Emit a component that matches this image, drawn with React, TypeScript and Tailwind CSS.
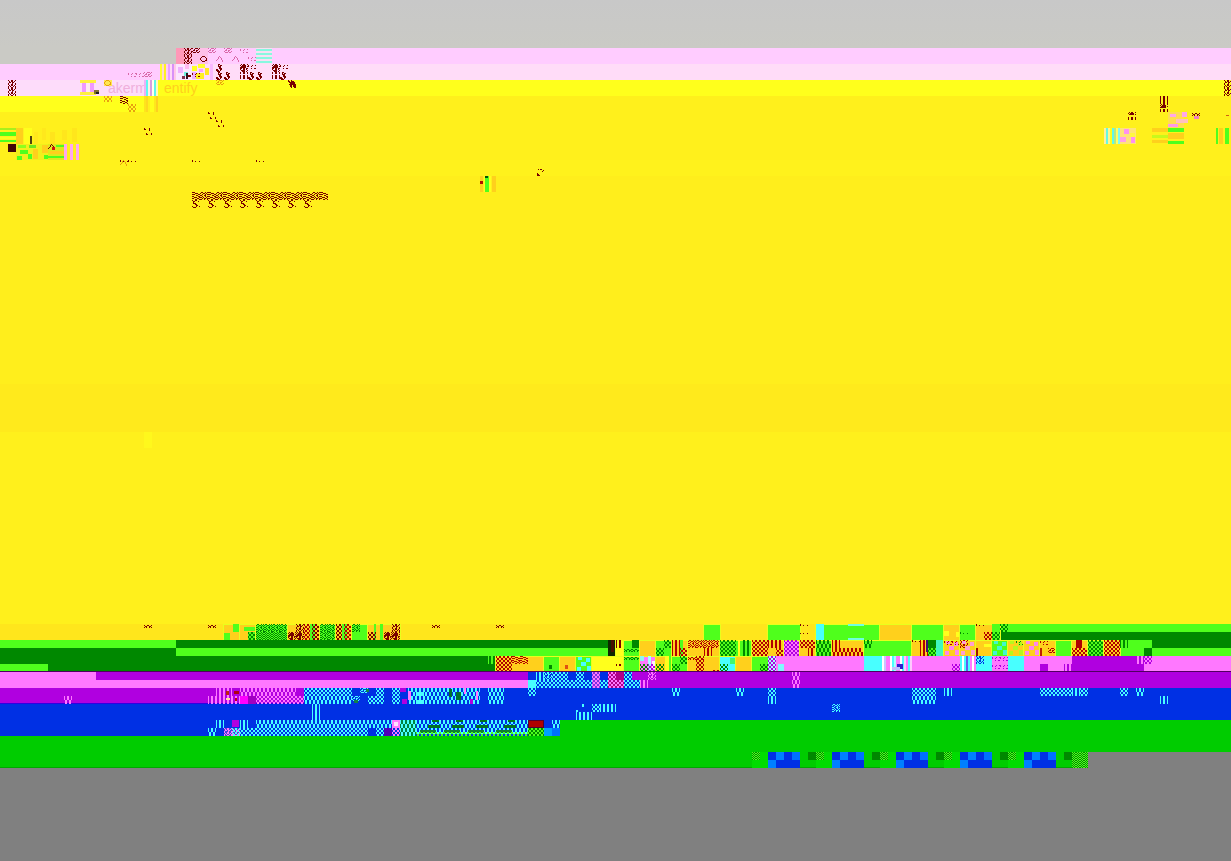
import React from "react";

type Cell = [x: number, y: number, w: number, h: number, fill: string];

const YELLOW = "#fff01c";
const BRIGHT = "#ffff1c";
const GOLD = "#ffd01c";
const LIME = "#4fff1c";
const DARK = "#008800";
const PINK = "#ff78ff";
const PURPLE = "#b000e0";
const BLUE = "#0030e4";
const CYAN = "#48ffff";
const MAROON = "#780000";

const INKS: Record<string, string> = {
  cyan: CYAN,
  pink: PINK,
  purple: PURPLE,
  red: "#b00000",
  maroon: MAROON,
  green: DARK,
  lime: LIME,
  mauve: "#d868a8",
  gold: "#e8a010",
  blue: BLUE,
};

// 8 x 8 dot tiles; each one can be printed in any of the inks.
const TILES: Record<string, string[]> = {
  check: ["x..xx..x", "x..xx..x", ".xx..xx.", ".xx..xx.", "x..xx..x", "x..xx..x", ".xx..xx.", ".xx..xx."],
  tall: ["x..xx..x", "x..xx..x", "x..xx..x", "x..xx..x", ".xx..xx.", ".xx..xx.", ".xx..xx.", ".xx..xx."],
  fine: ["x.x..x.x", ".x.xx.x.", "x.x..x.x", ".x.xx.x.", "x.x..x.x", ".x.xx.x.", "x.x..x.x", ".x.xx.x."],
  bars: ["x..xx..x", "x..xx..x", "x..xx..x", "x..xx..x", "x..xx..x", "x..xx..x", "x..xx..x", "x..xx..x"],
  hook: ["x..xx...", ".xx...x.", ".x......", ".xxx....", "...xx...", "....xx..", "x...x..x", ".xxx...."],
  weaveA: ["xxx.....", "...xxx..", "xxx...xx", "....xx..", "xx....xx", "..xxx..x", "xx...xx.", "...xx..x"],
  weaveB: [".xx..x.x", "x..xx.x.", "..x..x.x", "xx..xx..", "..x..x.x", "xx.x..x.", "..x.xx.x", "xx..x..x"],
  blob: [".x.xx..x", "x.xxxx..", ".xxxxx.x", "xxxxxx..", "xx.xx.xx", "x..xx.x.", ".xxxx..x", "..xxx.x."],
  bend: ["..xx....", "..x.xx..", "..xxx...", "...xx...", "...xxx..", "xx..xx..", "xxx.x...", ".xxx...."],
  fall: ["x..x....", "xx.xxx..", ".xxxxxx.", "..xxxxx.", ".xxxxxxx", "..xx.xxx", "..xx.xxx", "...x..xx"],
  twist: ["x..xx..x", ".x.xx.x.", ".xx.xx..", "x...x..x", "x..xx..x", ".x.xx.x.", "x.x..x.x", "x..xx..x"],
  ring: ["..xxx...", ".x...x..", "x.....x.", "x.....x.", ".x...xx.", "..xxx...", "........", "........"],
  loops: ["x..xxx.x", "..x...x.", ".xx.xx..", "x...x..x", ".xxx.xx.", "........", "........", "........"],
  ticks: ["........", "x...x..x", "x..x....", "........", "...x..xx", "........", "........", "........"],
  arrow: ["...x....", "..x.x...", "..x..x..", ".x...x..", "x.....x.", "......x.", "........", "........"],
  dots: ["x.......", "x..x...x", "........", "........", "........", "........", "........", "........"],
  wave: ["........", "x..xx..x", ".xx..xx.", "x.x..x.x", "........", "........", "........", "........"],
  spray: ["x....x..", "xx...x..", ".....x..", "........", "........", "..x....x", "..xx...x", "........"],
  comma: ["........", "..x.xx..", ".......x", "......x.", "........", ".x......", ".xx.....", ".xxx...."],
};

const p = (tile: string, ink: string) => `url(#${tile}-${ink})`;

function TileDefs() {
  return (
    <svg className="absolute h-0 w-0" aria-hidden="true">
      <defs>
        {Object.entries(TILES).flatMap(([name, rows]) =>
          Object.entries(INKS).map(([ink, color]) => (
            <pattern key={`${name}-${ink}`} id={`${name}-${ink}`} width="8" height="8" patternUnits="userSpaceOnUse">
              <path
                fill={color}
                shapeRendering="crispEdges"
                d={rows
                  .flatMap((row, y) => [...row].map((c, x) => (c === "x" ? `M${x} ${y}h1v1h-1z` : "")))
                  .join("")}
              />
            </pattern>
          )),
        )}
      </defs>
    </svg>
  );
}

function Band({ className, cells = [], children }: { className: string; cells?: Cell[]; children?: React.ReactNode }) {
  return (
    <div className={`relative flex ${className}`}>
      {children}
      {cells.length > 0 && (
        <svg className="absolute inset-0 h-full w-full" aria-hidden="true" shapeRendering="crispEdges">
          {cells.map(([x, y, w, h, fill], i) => (
            <rect key={i} x={x} y={y} width={w} height={h} fill={fill} />
          ))}
        </svg>
      )}
    </div>
  );
}

// A solid block with a one-pixel bright rim.
const block = (x: number, w: number, fill: string): Cell[] => [
  [x - 1, 0, w + 2, 16, "#e8ff1c"],
  [x, 1, w, 15, fill],
];
const vbars = (x: number, y: number, h: number, colors: string[], w = 2): Cell[] =>
  colors.map((c, i): Cell => [x + i * w, y, w, h, c]);
const spots = (x: number, color: string): Cell[] => [
  [x + 2, 1, 4, 3, color],
  [x + 10, 2, 4, 4, color],
  [x + 5, 6, 5, 4, color],
  [x + 1, 11, 4, 4, color],
  [x + 11, 10, 4, 5, color],
];

const row48: Cell[] = [
  [176, 0, 8, 16, "#ff98b8"], [184, 0, 8, 16, "#ffb0d0"], [192, 0, 16, 16, "#ffc0e8"],
  [184, 0, 8, 16, p("twist", "maroon")], [192, 0, 8, 8, p("loops", "maroon")], [200, 8, 8, 8, p("ring", "maroon")],
  [208, 0, 8, 8, p("loops", "mauve")], [224, 0, 8, 8, p("loops", "mauve")], [240, 0, 8, 8, p("ticks", "mauve")],
  [216, 8, 8, 8, p("arrow", "mauve")], [232, 8, 8, 8, p("arrow", "mauve")], [248, 8, 8, 8, p("ticks", "mauve")],
  [256, 0, 16, 16, "#f8e0f4"], [256, 1, 16, 2, "#88f8e0"], [256, 5, 16, 2, "#88f8e0"], [256, 9, 16, 2, "#88f8e0"], [256, 13, 16, 2, "#88f8e0"],
];
const row64: Cell[] = [
  ...vbars(160, 0, 16, ["#ffff30", "#ffd8d0", "#fff020", "#ffc8f8", "#e8a0ff", "#ffd8f8", "#d890f8", "#ffc8e8"]),
  [176, 0, 16, 16, "#fce4ff"], [178, 3, 5, 6, "#f0b0ff"], [185, 0, 4, 5, "#ffb8f0"], [184, 8, 4, 4, "#70f0e0"], [186, 9, 2, 6, "#301020"], [188, 11, 3, 2, MAROON], [182, 12, 3, 3, "#803050"],
  [192, 2, 5, 5, "#ffff20"], [198, 0, 7, 4, "#ffff30"], [205, 4, 4, 7, "#ffe820"], [196, 9, 8, 6, "#fff020"], [199, 5, 4, 3, "#f8a0ff"], [192, 8, 4, 7, "#f0b0ff"], [210, 0, 3, 16, "#f8b8ff"],
  [128, 8, 16, 8, p("ticks", "mauve")], [144, 8, 8, 8, p("loops", "mauve")], [192, 8, 8, 8, p("ticks", "maroon")],
  [216, 0, 8, 8, p("bend", "maroon")], [216, 8, 16, 8, p("bend", "maroon")],
  [240, 0, 8, 8, p("blob", "maroon")], [248, 0, 8, 8, p("ticks", "maroon")], [240, 8, 8, 2, p("bars", "maroon")], [240, 11, 8, 4, p("bars", "maroon")], [248, 8, 16, 8, p("bend", "maroon")],
  [272, 0, 8, 8, p("blob", "maroon")], [280, 0, 8, 8, p("ticks", "maroon")], [272, 8, 8, 2, p("bars", "maroon")], [272, 11, 8, 4, p("bars", "maroon")], [280, 8, 8, 8, p("bend", "maroon")],
];
const row80: Cell[] = [
  [8, 0, 8, 16, p("twist", "maroon")],
  [80, 0, 16, 3, "#fff040"], [80, 12, 16, 3, "#fff040"], [82, 3, 4, 9, "#f098ff"], [90, 3, 4, 9, "#f098ff"], [86, 3, 4, 9, "#ffe8f0"],
  [94, 10, 5, 4, "#807030"], [96, 12, 3, 2, "#202020"], [104, 0, 8, 6, "#ffe850"], [104, 0, 8, 8, p("ring", "gold")],
  ...vbars(144, 0, 16, ["#f0b0f8", "#60f8f0", "#fff0e8", "#d8a0e0", "#fffff0", "#60f8e8", "#fff8c0", "#ffff20"]),
  [208, 6, 8, 2, p("dots", "gold")], [216, 0, 8, 8, p("loops", "gold")], [288, 0, 8, 8, p("fall", "maroon")], [1224, 0, 8, 16, p("twist", "maroon")],
];
const row96: Cell[] = [
  [104, 0, 8, 6, p("check", "gold")], [120, 0, 8, 8, p("weaveA", "maroon")], [128, 8, 8, 8, p("check", "gold")],
  ...vbars(144, 0, 16, ["#ffe41c", "#ffd820", "#fff01c", BRIGHT, BRIGHT, "#ffe81c", "#ffd020", "#fff01c"]),
  [1160, 0, 8, 8, p("bars", "maroon")], [1160, 8, 8, 4, p("blob", "maroon")], [1160, 13, 8, 3, p("bars", "maroon")],
];
const row112: Cell[] = [
  [208, 0, 8, 8, p("spray", "maroon")], [216, 8, 8, 8, p("spray", "maroon")], [1128, 0, 8, 3, p("blob", "maroon")], [1128, 5, 8, 3, p("bars", "maroon")],
  [1168, 0, 16, 16, "#ffdf50"], [1170, 2, 6, 3, "#ffa8e8"], [1182, 0, 5, 5, "#ffa8e8"], [1176, 7, 12, 4, "#ffc0c0"], [1168, 12, 10, 3, "#ff98e8"],
  [1192, 1, 8, 6, p("wave", "maroon")], [1194, 4, 5, 3, "#f080c0"], [1226, 3, 3, 1, "#d06010"],
];
const row128: Cell[] = [
  [0, 0, 16, 2, "#a8f01c"], [0, 4, 16, 4, LIME], [0, 9, 16, 2, "#f8ff1c"], [0, 12, 16, 2, LIME],
  [16, 0, 7, 16, GOLD], [24, 0, 8, 16, BRIGHT], [30, 8, 2, 8, "#504010"],
  [34, 4, 4, 12, "#ffe81c"], [42, 0, 4, 12, "#ffe81c"], [50, 4, 5, 12, "#ffe41c"], [62, 2, 5, 10, "#ffe61c"], [72, 0, 5, 14, "#ffe61c"],
  [144, 0, 8, 8, p("spray", "maroon")],
  ...vbars(1104, 0, 16, ["#fff0a0", "#68f8e0", "#fff890", BRIGHT, "#60f8e8", "#b8e880", "#ffff60", "#80f8f0"]),
  [1120, 0, 16, 16, "#ffe478"], [1124, 1, 5, 5, "#ff90f0"], [1130, 5, 5, 4, "#fff840"], [1120, 9, 6, 5, "#ffa0e8"], [1131, 9, 4, 6, "#ff90f0"],
  [1152, 0, 16, 4, GOLD], [1152, 7, 16, 3, "#c8f81c"], [1152, 12, 16, 3, GOLD], [1168, 0, 16, 4, LIME], [1168, 5, 16, 6, GOLD], [1168, 13, 16, 3, LIME],
  [1216, 0, 2, 16, LIME], [1219, 0, 4, 16, GOLD], [1225, 0, 4, 16, LIME],
];
const row144: Cell[] = [
  [8, 0, 8, 8, "#400808"],
  [16, 0, 32, 16, "#f0f01c"], [18, 1, 8, 3, "#90ff1c"], [20, 6, 8, 4, LIME], [29, 1, 7, 3, "#70e81c"], [17, 12, 5, 4, LIME], [28, 10, 4, 5, LIME], [33, 5, 5, 10, GOLD], [42, 1, 6, 8, GOLD], [44, 11, 4, 4, LIME],
  [48, 0, 16, 16, "#e0e81c"], [56, 1, 8, 2, LIME], [50, 7, 14, 3, GOLD], [48, 12, 16, 2, LIME], [48, 0, 8, 8, p("arrow", "maroon")], [52, 3, 3, 3, "#d01010"],
  [64, 0, 3, 16, "#ffa8f0"], [70, 0, 3, 16, "#ffa8f0"], [76, 0, 3, 16, "#ffa8f0"],
];
const row160: Cell[] = [
  [120, 0, 8, 8, p("arrow", "gold")], [120, 0, 16, 2, p("dots", "maroon")], [192, 0, 8, 2, p("dots", "maroon")], [256, 0, 8, 2, p("dots", "maroon")],
  [536, 8, 8, 8, p("comma", "maroon")],
];
const row176: Cell[] = [
  [480, 0, 3, 16, GOLD], [484, 0, 7, 16, BRIGHT], [485, 0, 4, 16, LIME], [485, 0, 3, 2, "#085008"], [480, 5, 3, 3, "#b01000"], [492, 0, 4, 16, GOLD],
];
const row192: Cell[] = [
  ...[192, 208, 224, 240, 256, 272, 288, 304, 320].map((x): Cell => [x, 0, 8, 8, p("weaveA", "maroon")]),
  ...[200, 216, 232, 248, 264, 280, 296, 312].map((x): Cell => [x, 0, 8, 8, p("weaveB", "maroon")]),
  ...[192, 208, 224, 240, 256, 272, 288, 304].map((x): Cell => [x, 8, 8, 8, p("hook", "maroon")]),
];

const row624: Cell[] = [
  [144, 0, 8, 8, p("wave", "maroon")], [208, 0, 8, 8, p("wave", "maroon")], [432, 0, 8, 8, p("wave", "maroon")], [496, 0, 8, 8, p("wave", "maroon")],
  ...block(224, 16, GOLD), [224, 9, 6, 7, LIME], [233, 0, 7, 8, LIME], [239, 8, 2, 8, BRIGHT],
  ...block(240, 16, GOLD), [244, 3, 12, 4, LIME], [248, 8, 8, 8, LIME], [248, 8, 8, 8, p("check", "green")],
  ...block(256, 32, LIME), [256, 0, 32, 8, p("weaveB", "green")], [256, 8, 32, 8, p("fine", "green")],
  ...block(288, 32, GOLD), [288, 8, 16, 8, p("blob", "maroon")], [296, 0, 8, 8, p("twist", "maroon")], [304, 0, 8, 16, p("check", "red")], [310, 0, 5, 16, LIME], [312, 0, 8, 16, p("check", "maroon")],
  ...block(320, 16, LIME), [320, 0, 16, 16, p("weaveB", "green")],
  ...block(336, 16, GOLD), [336, 0, 8, 16, p("check", "maroon")], [342, 0, 5, 16, LIME], [344, 0, 8, 16, p("check", "red")],
  ...block(352, 16, LIME), [352, 0, 8, 8, p("weaveB", "green")],
  ...block(368, 32, GOLD), [374, 0, 2, 16, LIME], [380, 0, 3, 16, LIME], [368, 8, 8, 8, p("check", "maroon")], [384, 8, 16, 8, p("blob", "maroon")], [392, 0, 8, 8, p("twist", "maroon")],
  ...block(704, 16, LIME), ...block(768, 32, LIME), [800, 0, 8, 2, p("dots", "maroon")], [800, 9, 8, 2, p("dots", "maroon")],
  ...block(816, 64, LIME), [816, 0, 8, 16, CYAN], [848, 0, 16, 2, "#70ffe0"], [848, 14, 16, 2, "#70ffe0"],
  ...block(880, 32, GOLD), ...block(912, 32, LIME), ...block(944, 16, GOLD), [944, 7, 5, 5, BRIGHT], [956, 8, 4, 5, BRIGHT],
  ...block(960, 16, LIME), [960, 8, 8, 8, p("dots", "green")], ...block(976, 24, GOLD), [976, 0, 8, 8, p("dots", "maroon")], [984, 8, 8, 8, p("check", "red")], [992, 0, 8, 16, LIME], [992, 8, 8, 8, p("check", "green")], [1000, 0, 8, 8, p("check", "green")],
];
const row640: Cell[] = [
  [608, 0, 8, 16, "#102800"], [611, 0, 3, 12, "#481000"], ...block(616, 8, BRIGHT), [616, 0, 8, 8, p("bars", "maroon")],
  ...block(624, 16, LIME), [624, 8, 16, 8, p("wave", "green")], [632, 0, 8, 8, DARK],
  ...block(640, 16, GOLD), ...block(656, 16, LIME), [664, 0, 8, 8, p("check", "green")], [656, 8, 8, 8, p("check", "green")],
  ...block(672, 16, GOLD), [672, 0, 8, 16, p("bars", "red")], [680, 0, 3, 16, LIME], [680, 8, 8, 8, p("check", "red")],
  ...block(688, 32, GOLD), [688, 0, 32, 8, p("weaveB", "red")], [704, 8, 8, 8, p("bars", "red")],
  ...block(720, 32, LIME), [720, 0, 16, 16, p("check", "green")], [738, 0, 2, 16, BRIGHT], [743, 0, 8, 16, p("bars", "green")],
  ...block(752, 32, GOLD), [752, 0, 16, 16, p("check", "red")], [768, 0, 16, 8, p("bars", "red")], [776, 8, 8, 8, p("check", "red")],
  ...block(784, 16, PINK), [784, 0, 16, 16, p("check", "purple")],
  ...block(800, 16, GOLD), [800, 0, 16, 8, p("check", "red")], [808, 8, 8, 8, p("bars", "red")],
  ...block(816, 16, LIME), [816, 0, 16, 16, p("tall", "green")], ...block(832, 32, GOLD), [832, 0, 8, 8, p("bars", "red")], [832, 8, 32, 8, p("tall", "red")],
  ...block(864, 48, LIME), [864, 0, 8, 8, p("tall", "green")],
  ...block(912, 16, GOLD), [920, 0, 8, 16, p("bars", "red")], [912, 0, 8, 8, p("dots", "maroon")], [926, 0, 2, 12, "#401070"], [928, 0, 8, 16, DARK], [928, 8, 8, 8, p("check", "lime")], [936, 0, 8, 16, "#40f8c0"],
  ...block(944, 16, GOLD), ...spots(944, "#ff88e8"), [944, 0, 16, 8, p("ticks", "red")], ...block(960, 16, GOLD), [960, 0, 8, 8, p("twist", "red")], ...spots(960, "#ffa0d0"),
  ...block(976, 16, GOLD), [976, 8, 2, 8, "#a01000"], [984, 4, 8, 3, BRIGHT], ...block(992, 16, LIME), ...spots(992, "#40f8d0"),
  ...block(1008, 16, GOLD), ...spots(1008, "#b8f81c"), [1016, 0, 8, 8, p("ticks", "green")], ...block(1024, 16, GOLD), ...spots(1024, "#ff88e8"),
  ...block(1040, 16, GOLD), [1040, 8, 2, 8, "#c02000"], [1040, 0, 8, 8, p("ticks", "red")], [1048, 8, 8, 8, p("loops", "red")], ...block(1056, 16, LIME),
  ...block(1072, 16, GOLD), [1076, 0, 6, 8, "#b00000"], [1072, 8, 16, 8, p("check", "red")],
  ...block(1088, 16, LIME), [1088, 0, 16, 16, p("check", "green")], ...block(1104, 16, GOLD), [1104, 0, 16, 16, p("check", "red")], [1120, 0, 8, 8, p("bars", "green")], [1144, 8, 8, 8, DARK],
];
const row656: Cell[] = [
  [488, 0, 8, 8, p("bars", "lime")], ...block(496, 48, GOLD), [496, 0, 16, 16, p("check", "red")], [512, 0, 16, 8, p("weaveA", "red")],
  ...block(544, 16, LIME), [549, 9, 3, 4, DARK], ...block(560, 16, GOLD), [565, 9, 3, 4, "#e05010"],
  ...block(576, 16, LIME), ...spots(576, CYAN), ...block(592, 32, BRIGHT), [616, 8, 8, 2, p("bars", "maroon")],
  ...block(624, 16, LIME), [624, 0, 16, 8, p("wave", "green")],
  ...block(640, 16, PINK), [640, 0, 4, 5, "#90f8f0"], [648, 0, 3, 16, "#a8ffff"], [640, 8, 8, 8, p("check", "green")], [652, 5, 3, 8, "#fff0ff"], [648, 8, 8, 8, p("check", "purple")],
  ...block(656, 16, GOLD), [656, 8, 8, 8, p("check", "green")], [665, 0, 4, 16, BRIGHT], [669, 0, 3, 16, LIME],
  ...block(672, 16, LIME), [672, 8, 8, 8, p("check", "green")], [680, 0, 8, 8, p("check", "green")], ...block(688, 32, GOLD), [688, 0, 16, 8, p("wave", "red")], [696, 0, 8, 16, p("check", "red")], [712, 14, 8, 2, p("check", "red")],
  ...block(720, 16, CYAN), [720, 8, 8, 8, p("check", "green")], [730, 2, 5, 6, "#40f870"], ...block(736, 16, GOLD), ...block(752, 16, LIME), [760, 8, 8, 8, p("check", "green")],
  [768, 0, 8, 16, "#a8ffff"], [768, 0, 8, 16, p("check", "purple")], [778, 8, 6, 8, "#80f8ff"],
  [864, 0, 16, 16, CYAN], ...vbars(880, 0, 16, [CYAN, "#fff", "#c8c8ff", PINK, PINK, "#fff", CYAN, "#a8ffff", PINK, PINK, "#fff", CYAN, "#ffc8ff", PINK, CYAN, "#ffc8ff"]), [897, 8, 6, 5, "#3020d0"], [892, 11, 8, 3, "#c0c0ff"],
  [912, 0, 16, 8, p("ticks", "pink")], [952, 8, 8, 8, p("check", "purple")], ...vbars(960, 0, 16, [CYAN, "#fff", CYAN, "#6060f0", CYAN, PINK, "#fff", PINK]), [976, 0, 16, 16, CYAN], [976, 0, 8, 8, p("twist", "blue")],
  [992, 0, 16, 16, p("ticks", "purple")], [1008, 0, 16, 16, CYAN], [1040, 8, 8, 8, PURPLE], [1064, 8, 8, 8, p("bars", "purple")],
  [1072, 0, 64, 16, PURPLE], [1136, 0, 8, 8, p("bars", "purple")], [1136, 8, 8, 8, PURPLE], [1144, 0, 8, 8, p("check", "purple")],
];
const row672: Cell[] = [
  [528, 0, 120, 16, BLUE], [528, 8, 8, 8, CYAN], [536, 0, 8, 8, p("bars", "cyan")], [544, 0, 8, 8, p("twist", "cyan")], [552, 0, 16, 8, p("check", "cyan")], [576, 0, 8, 8, p("check", "cyan")], [536, 8, 56, 8, p("check", "cyan")],
  [592, 0, 8, 16, "#8030e0"], [592, 0, 8, 16, p("check", "pink")], [600, 8, 8, 8, p("check", "cyan")], [608, 0, 16, 16, "#b00088"], [608, 0, 8, 16, p("check", "pink")], [616, 8, 8, 8, p("check", "pink")],
  [624, 0, 8, 16, p("check", "cyan")], [632, 0, 8, 8, PURPLE], [632, 8, 8, 8, p("check", "cyan")], [640, 0, 16, 16, PURPLE], [640, 8, 8, 8, p("bars", "pink")], [648, 0, 8, 8, p("twist", "pink")], [792, 0, 8, 16, p("tall", "pink")],
];
const row688: Cell[] = [
  [64, 8, 8, 8, p("tall", "pink")], [208, 8, 32, 8, p("bars", "pink")], [216, 0, 16, 8, p("bars", "pink")], [240, 0, 56, 8, p("tall", "pink")], [240, 8, 8, 8, "#ff00ff"], [248, 8, 8, 8, "#a000c0"], [256, 8, 48, 8, p("check", "pink")],
  [226, 3, 3, 4, "#c02010"], [234, 3, 5, 3, "#b00010"], [226, 10, 4, 2, "#ffe0a0"], [235, 10, 2, 3, "#c00010"],
  [304, 0, 48, 8, p("check", "cyan")], [304, 8, 48, 8, p("tall", "cyan")], [360, 0, 8, 8, p("loops", "cyan")], [366, 1, 3, 3, "#108048"], [352, 8, 8, 8, p("loops", "cyan")], [354, 12, 4, 3, "#108048"], [376, 0, 8, 16, p("check", "cyan")], [392, 0, 8, 16, p("check", "cyan")], [368, 8, 8, 8, p("check", "cyan")],
  [400, 0, 6, 4, PURPLE], [402, 11, 5, 5, PURPLE], [408, 0, 72, 16, p("tall", "cyan")], [408, 3, 3, 9, PINK], [416, 0, 8, 16, p("bars", "cyan")], [449, 1, 3, 8, "#007030"], [456, 4, 5, 8, "#007030"], [464, 0, 2, 6, PINK], [470, 11, 3, 5, PURPLE], [476, 3, 2, 9, PINK],
  [488, 0, 16, 16, p("tall", "cyan")], [528, 0, 8, 8, p("check", "cyan")], [672, 0, 8, 8, p("tall", "cyan")], [736, 0, 8, 8, p("tall", "cyan")], [768, 0, 8, 8, p("check", "cyan")], [768, 8, 8, 8, p("bars", "cyan")],
  [912, 0, 24, 8, p("check", "cyan")], [912, 8, 24, 8, p("tall", "cyan")], [944, 0, 8, 8, p("bars", "cyan")], [1040, 0, 32, 8, p("check", "cyan")], [1072, 0, 8, 8, p("bars", "cyan")], [1080, 0, 8, 8, p("check", "cyan")], [1120, 0, 8, 8, p("check", "cyan")], [1136, 0, 8, 8, p("tall", "cyan")], [1160, 8, 8, 8, p("bars", "cyan")],
];
const row704: Cell[] = [
  [312, 0, 8, 16, p("bars", "cyan")], [582, 0, 2, 3, CYAN], [576, 6, 2, 2, CYAN], [576, 8, 16, 8, p("bars", "cyan")], [592, 0, 8, 8, p("check", "cyan")], [600, 0, 16, 8, p("bars", "cyan")], [832, 0, 8, 8, p("weaveB", "cyan")],
];
const row720: Cell[] = [
  [216, 0, 8, 8, p("bars", "cyan")], [208, 8, 8, 8, p("tall", "cyan")], [232, 0, 7, 7, PURPLE], [240, 0, 8, 8, p("bars", "cyan")], [256, 0, 136, 8, p("tall", "cyan")], [240, 8, 128, 8, p("check", "cyan")], [224, 8, 16, 8, "#5040d8"], [224, 8, 16, 8, p("twist", "pink")], [232, 8, 8, 8, p("check", "cyan")], [376, 8, 8, 8, p("check", "cyan")],
  [392, 0, 8, 8, PINK], [394, 2, 4, 4, "#ffe0ff"], [384, 8, 8, 8, "#5000b8"], [392, 8, 8, 8, p("check", "pink")],
  [400, 0, 16, 16, "#008040"], [400, 0, 128, 16, p("tall", "cyan")],
  ...[432, 456, 480, 508].flatMap((x): Cell[] => [[x, 0, 7, 2, "#007020"], [x - 4, 5, 12, 3, "#007020"], [x - 12, 10, 16, 3, "#108030"]]), [416, 12, 112, 4, p("check", "lime")],
  [528, 0, 16, 8, "#500030"], [529, 1, 14, 6, "#b00000"], [528, 8, 16, 8, DARK], [528, 8, 16, 8, p("check", "lime")], [544, 8, 8, 8, "#00a0ff"], [552, 8, 8, 8, "#0070ff"], [552, 0, 8, 8, p("tall", "cyan")],
];
const row752: Cell[] = [
  ...[752, 816, 880, 944, 1008].flatMap((x): Cell[] => [
    [x, 0, 16, 16, "#00dc00"], [x, 0, 8, 8, DARK], [x, 0, 8, 8, p("fine", "lime")],
    [x + 16, 0, 32, 16, BLUE], [x + 24, 0, 8, 8, "#0080ff"], [x + 40, 0, 8, 8, "#0070ff"], [x + 16, 8, 8, 8, "#0080ff"], [x + 56, 0, 8, 8, DARK],
  ]),
  [1072, 0, 16, 16, DARK], [1072, 0, 16, 16, p("fine", "lime")],
];

export default function App() {
  return (
    <main className="flex min-h-screen w-full flex-col bg-[#808080] font-['Liberation_Sans',sans-serif]">
      <TileDefs />
      <Band className="h-12 bg-linear-to-b from-[#c8c8c8] to-[#cacac5]" />
      <Band className="h-4 bg-[#ffccff]" cells={row48}>
        <div className="w-44 bg-[#cacac5]" />
      </Band>
      <Band className="h-4 bg-[#ffdcf8]" cells={row64}>
        <div className="w-40 bg-[#ffccff]" />
      </Band>
      <Band className="h-4 bg-[#ffff1c]" cells={row80}>
        <div className="w-40 bg-[#fddcfa] pl-27 text-sm leading-4 text-[#efb0dc]">akerm</div>
        <div className="pl-1 text-sm leading-4 text-[#ffd01c]">entify</div>
      </Band>
      <Band className="h-4 bg-[#fff01c]" cells={row96}>
        <div className="w-40 bg-[#ffff1c]" />
      </Band>
      <Band className="h-4 bg-[#fff01c]" cells={row112} />
      <Band className="h-4 bg-[#fff01c]" cells={row128} />
      <Band className="h-4 bg-[#fff01c]" cells={row144} />
      <Band className="h-4 bg-[#fff21c]" cells={row160} />
      <Band className="h-4 bg-[#ffee1c]" cells={row176} />
      <Band className="h-4 bg-[#ffee1c]" cells={row192} />
      <Band className="h-44 bg-[#ffee1c]" />
      <Band className="h-12 bg-[#ffea1c]" />
      <Band className="h-4 bg-[#fff01c]">
        <div className="ml-36 w-2 bg-[#fff81c]" />
      </Band>
      <Band className="h-44 bg-[#fff01c]" />
      <Band className="h-4 bg-[#ffe61c]" cells={row624}>
        <div className="ml-[1000px] flex flex-1 flex-col">
          <div className="h-2 bg-[#4fff1c]" />
          <div className="h-2 bg-[#008800]" />
        </div>
      </Band>
      <Band className="h-4 bg-[#4fff1c]" cells={row640}>
        <div className="flex w-44 flex-col">
          <div className="h-2 bg-[#4fff1c]" />
          <div className="h-2 bg-[#008800]" />
        </div>
        <div className="h-2 w-108 bg-[#008800]" />
        <div className="ml-136 h-2 flex-1 bg-[#008800]" />
      </Band>
      <Band className="h-4 border-b border-[#500060] bg-[#ff78ff]" cells={row656}>
        <div className="flex w-[496px] flex-col bg-[#008800]">
          <div className="mt-2 h-2 w-12 bg-[#4fff1c]" />
        </div>
      </Band>
      <Band className="h-4 bg-[#b000e0]" cells={row672}>
        <div className="w-24 bg-[#ff78ff]" />
        <div className="mt-2 w-108 bg-[#ff78ff]" />
      </Band>
      <Band className="h-4 bg-[#0030e4]" cells={row688}>
        <div className="w-76 border-b border-[#3000e0] bg-[#b000e0]" />
      </Band>
      <Band className="h-4 bg-[#0030e4]" cells={row704} />
      <Band className="h-4 bg-[#0030e4]" cells={row720}>
        <div className="ml-140 flex-1 bg-[#00cc00]" />
      </Band>
      <Band className="h-4 bg-[#00cc00]" />
      <Band className="h-4 bg-[#808080]" cells={row752}>
        <div className="w-272 border-b border-[#00a800] bg-[#00cc00]" />
      </Band>
    </main>
  );
}
